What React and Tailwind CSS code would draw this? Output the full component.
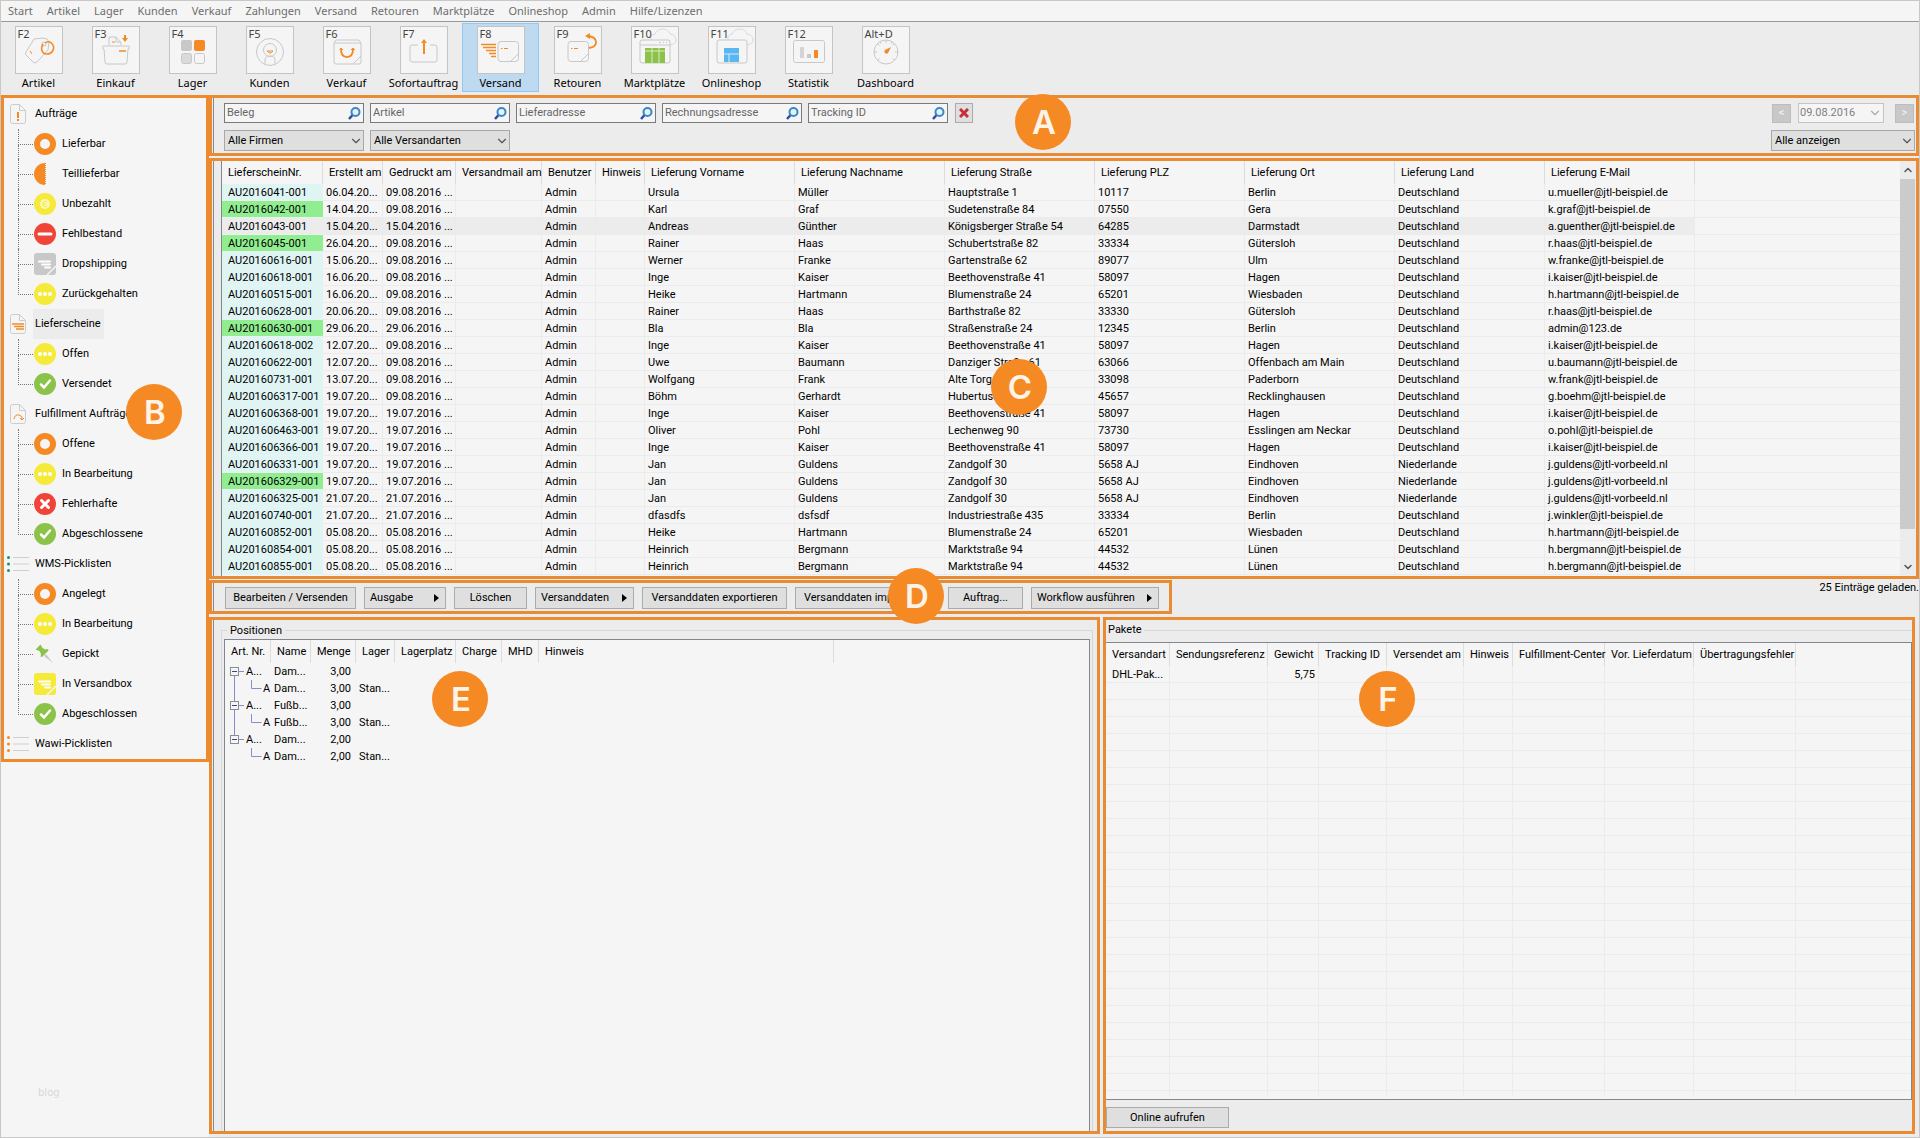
import React, { useState } from "react"
import clsx from "clsx"
import { ChevronDown, ChevronUp } from "lucide-react"

const menu = [
  "Start",
  "Artikel",
  "Lager",
  "Kunden",
  "Verkauf",
  "Zahlungen",
  "Versand",
  "Retouren",
  "Marktplätze",
  "Onlineshop",
  "Admin",
  "Hilfe/Lizenzen",
]

const toolIcons = {
  Artikel: (
    <>
      <path d="M19 13l9-1q5 0 6 4l-1 8-11 12q-2 2-4 0l-7-7q-1-2 0-3z" />
      <circle cx="29" cy="18" r="2" />
      <path
        d="M28 18c-3 5-1 10 4 10s8-5 6-9-6-4-8-2"
        stroke="#f28a26"
        strokeWidth="1.5"
      />
      <path d="M15 25l2 3" stroke="#f28a26" />
    </>
  ),
  Einkauf: (
    <>
      <path d="M17 19v-8h7l5 6v2M24 11v5h5" />
      <path d="M20 16h3" stroke="#f28a26" />
      <path d="M11 20h26v3h-1l-1 13q0 2-2 2H15q-2 0-2-2l-1-13h-1z" />
      <path d="M27 25h7" stroke="#f28a26" strokeWidth="1.5" />
      <path d="M33 9v4" stroke="#f28a26" strokeWidth="2" />
      <path d="M30 12h6l-3 4z" fill="#f28a26" stroke="none" />
    </>
  ),
  Lager: (
    <>
      <rect x="12" y="14" width="11" height="11" rx="2" fill="#c8c8c8" stroke="none" />
      <rect x="25" y="14" width="11" height="11" rx="2" fill="#f58a25" stroke="none" />
      <rect x="12.5" y="27.5" width="10" height="10" rx="2" fill="#dadada" />
      <rect x="25.5" y="27.5" width="10" height="10" rx="2" />
    </>
  ),
  Kunden: (
    <>
      <circle cx="24" cy="26" r="13.5" />
      <circle cx="24" cy="24" r="6.5" />
      <path d="M19 38v-4q0-4 5-4t5 4v4" />
      <path d="M21 25q3 4 6 0z" stroke="#f28a26" />
    </>
  ),
  Verkauf: (
    <>
      <path d="M11 17l2-3h23l2 3v19q0 2-2 2H13q-2 0-2-2zM11 17h27M30 38l8-8" />
      <path d="M18 23q0 8 6 8t6-8" stroke="#f28a26" strokeWidth="1.8" />
      <path d="M16.500 24l1.500-2 2 2M28 24l2-2 2 2" stroke="#f28a26" />
    </>
  ),
  Sofortauftrag: (
    <>
      <path d="M18 19h-6q-2 0-2 2v13q0 2 2 2h23q2 0 2-2V21q0-2-2-2h-5" />
      <path d="M24 28V15" stroke="#f28a26" strokeWidth="2" />
      <path d="M21 17l3-4 3 4z" fill="#f28a26" stroke="none" />
    </>
  ),
  Versand: (
    <>
      <path
        d="M4 18.500h15M6 21.500h13M9 24.500h10M12 27.500h7M14 30.500h5"
        stroke="#f28a26"
        strokeWidth="1.5"
      />
      <rect x="21" y="15.500" width="20.500" height="20" rx="3" />
      <path d="M34 35l7-7" />
      <path d="M24 22.500h1.500M27 22.500h4" stroke="#f28a26" />
    </>
  ),
  Retouren: (
    <>
      <rect x="14" y="15.500" width="20.500" height="20" rx="3" />
      <path d="M27 35l7-7" />
      <path d="M17 22.500h1.500M20 22.500h4" stroke="#f28a26" />
      <path d="M35 22q7-1 7-6t-8-6" stroke="#f28a26" strokeWidth="1.8" />
      <path d="M31 10l5-3v6z" fill="#f28a26" stroke="none" />
    </>
  ),
  Marktplätze: (
    <>
      <Cloud />
      <rect x="9" y="14" width="30" height="23" rx="2" fill="#f5f5f5" />
      <path d="M9 19h30M28 16.500h2M32 16.500h1M35 16.500h1" />
      <path d="M14 22h20v15H14z" fill="#8bc34a" stroke="none" />
      <path d="M14 25h20M21 22v15M28 22v15" stroke="#d9ecc0" />
    </>
  ),
  Onlineshop: (
    <>
      <Cloud />
      <rect x="9" y="14" width="30" height="23" rx="2" fill="#f5f5f5" />
      <path d="M16 22h15v14H16z" fill="#58b7f0" stroke="none" />
      <path d="M16 28h15M21 28v8" stroke="#d5ecfb" />
    </>
  ),
  Statistik: (
    <>
      <rect x="8.500" y="14.500" width="31" height="22" rx="2" />
      <path d="M17 21v11" strokeWidth="4" stroke="#d4d4d4" />
      <path d="M24 28v4" strokeWidth="4" />
      <path d="M31 24v8" stroke="#f58a25" strokeWidth="4" />
    </>
  ),
  Dashboard: (
    <>
      <circle cx="24" cy="26" r="12" />
      <path d="M24 14v3M12 26h3M33 26h3M15.500 17.500l2 2M32.500 17.500l-2 2M15.500 34.500l2-2M32.500 34.500l-2-2M18 15.600l1 2M30 15.600l-1 2" />
      <path d="M29 21l-3 6a2 2 0 1 1-3-3z" fill="#f28a26" stroke="none" />
    </>
  ),
}

const tools = [
  ["F2", "Artikel"],
  ["F3", "Einkauf"],
  ["F4", "Lager"],
  ["F5", "Kunden"],
  ["F6", "Verkauf"],
  ["F7", "Sofortauftrag"],
  ["F8", "Versand"],
  ["F9", "Retouren"],
  ["F10", "Marktplätze"],
  ["F11", "Onlineshop"],
  ["F12", "Statistik"],
  ["Alt+D", "Dashboard"],
]

const tree = [
  {
    label: "Aufträge",
    icon: "alert",
    items: [
      ["Lieferbar", "ring"],
      ["Teillieferbar", "half"],
      ["Unbezahlt", "euro"],
      ["Fehlbestand", "minus"],
      ["Dropshipping", "boxGray"],
      ["Zurückgehalten", "dots"],
    ],
  },
  {
    label: "Lieferscheine",
    icon: "delivery",
    items: [
      ["Offen", "dots"],
      ["Versendet", "check"],
    ],
  },
  {
    label: "Fulfillment Aufträge",
    icon: "fulfill",
    items: [
      ["Offene", "ring"],
      ["In Bearbeitung", "dots"],
      ["Fehlerhafte", "cross"],
      ["Abgeschlossene", "check"],
    ],
  },
  {
    label: "WMS-Picklisten",
    icon: "listGreen",
    items: [
      ["Angelegt", "ring"],
      ["In Bearbeitung", "dots"],
      ["Gepickt", "pin"],
      ["In Versandbox", "boxYellow"],
      ["Abgeschlossen", "check"],
    ],
  },
  { label: "Wawi-Picklisten", icon: "listOrange", items: [] },
]

const noteColumns = [
  ["LieferscheinNr.", "w-[101px]"],
  ["Erstellt am", "w-[60px]"],
  ["Gedruckt am", "w-[73px]"],
  ["Versandmail am", "w-[86px]"],
  ["Benutzer", "w-[54px]"],
  ["Hinweis", "w-[49px]"],
  ["Lieferung Vorname", "w-[150px]"],
  ["Lieferung Nachname", "w-[150px]"],
  ["Lieferung Straße", "w-[150px]"],
  ["Lieferung PLZ", "w-[150px]"],
  ["Lieferung Ort", "w-[150px]"],
  ["Lieferung Land", "w-[150px]"],
  ["Lieferung E-Mail", "w-[150px]"],
]

const DE = "Deutschland"
const NL = "Niederlande"

// number, created, printed, first name, last name, street, zip, city, country, mail
const notes = [
  ["AU2016041-001", "06.04.20...", "09.08.2016 ...", "Ursula", "Müller", "Hauptstraße 1", "10117", "Berlin", DE, "u.mueller@jtl-beispiel.de"],
  ["AU2016042-001", "14.04.20...", "09.08.2016 ...", "Karl", "Graf", "Sudetenstraße 84", "07550", "Gera", DE, "k.graf@jtl-beispiel.de"],
  ["AU2016043-001", "15.04.20...", "15.04.2016 ...", "Andreas", "Günther", "Königsberger Straße 54", "64285", "Darmstadt", DE, "a.guenther@jtl-beispiel.de"],
  ["AU2016045-001", "26.04.20...", "09.08.2016 ...", "Rainer", "Haas", "Schubertstraße 82", "33334", "Gütersloh", DE, "r.haas@jtl-beispiel.de"],
  ["AU20160616-001", "15.06.20...", "09.08.2016 ...", "Werner", "Franke", "Gartenstraße 62", "89077", "Ulm", DE, "w.franke@jtl-beispiel.de"],
  ["AU20160618-001", "16.06.20...", "09.08.2016 ...", "Inge", "Kaiser", "Beethovenstraße 41", "58097", "Hagen", DE, "i.kaiser@jtl-beispiel.de"],
  ["AU20160515-001", "16.06.20...", "09.08.2016 ...", "Heike", "Hartmann", "Blumenstraße 24", "65201", "Wiesbaden", DE, "h.hartmann@jtl-beispiel.de"],
  ["AU20160628-001", "20.06.20...", "09.08.2016 ...", "Rainer", "Haas", "Barthstraße 82", "33330", "Gütersloh", DE, "r.haas@jtl-beispiel.de"],
  ["AU20160630-001", "29.06.20...", "29.06.2016 ...", "Bla", "Bla", "Straßenstraße 24", "12345", "Berlin", DE, "admin@123.de"],
  ["AU20160618-002", "12.07.20...", "09.08.2016 ...", "Inge", "Kaiser", "Beethovenstraße 41", "58097", "Hagen", DE, "i.kaiser@jtl-beispiel.de"],
  ["AU20160622-001", "12.07.20...", "09.08.2016 ...", "Uwe", "Baumann", "Danziger Straße 61", "63066", "Offenbach am Main", DE, "u.baumann@jtl-beispiel.de"],
  ["AU20160731-001", "13.07.20...", "09.08.2016 ...", "Wolfgang", "Frank", "Alte Torgasse", "33098", "Paderborn", DE, "w.frank@jtl-beispiel.de"],
  ["AU201606317-001", "19.07.20...", "09.08.2016 ...", "Böhm", "Gerhardt", "Hubertusstraße", "45657", "Recklinghausen", DE, "g.boehm@jtl-beispiel.de"],
  ["AU201606368-001", "19.07.20...", "19.07.2016 ...", "Inge", "Kaiser", "Beethovenstraße 41", "58097", "Hagen", DE, "i.kaiser@jtl-beispiel.de"],
  ["AU201606463-001", "19.07.20...", "19.07.2016 ...", "Oliver", "Pohl", "Lechenweg 90", "73730", "Esslingen am Neckar", DE, "o.pohl@jtl-beispiel.de"],
  ["AU201606366-001", "19.07.20...", "19.07.2016 ...", "Inge", "Kaiser", "Beethovenstraße 41", "58097", "Hagen", DE, "i.kaiser@jtl-beispiel.de"],
  ["AU201606331-001", "19.07.20...", "19.07.2016 ...", "Jan", "Guldens", "Zandgolf 30", "5658 AJ", "Eindhoven", NL, "j.guldens@jtl-vorbeeld.nl"],
  ["AU201606329-001", "19.07.20...", "19.07.2016 ...", "Jan", "Guldens", "Zandgolf 30", "5658 AJ", "Eindhoven", NL, "j.guldens@jtl-vorbeeld.nl"],
  ["AU201606325-001", "21.07.20...", "21.07.2016 ...", "Jan", "Guldens", "Zandgolf 30", "5658 AJ", "Eindhoven", NL, "j.guldens@jtl-vorbeeld.nl"],
  ["AU20160740-001", "21.07.20...", "21.07.2016 ...", "dfasdfs", "dsfsdf", "Industriestraße 435", "33334", "Berlin", DE, "j.winkler@jtl-beispiel.de"],
  ["AU20160852-001", "05.08.20...", "05.08.2016 ...", "Heike", "Hartmann", "Blumenstraße 24", "65201", "Wiesbaden", DE, "h.hartmann@jtl-beispiel.de"],
  ["AU20160854-001", "05.08.20...", "05.08.2016 ...", "Heinrich", "Bergmann", "Marktstraße 94", "44532", "Lünen", DE, "h.bergmann@jtl-beispiel.de"],
  ["AU20160855-001", "05.08.20...", "05.08.2016 ...", "Heinrich", "Bergmann", "Marktstraße 94", "44532", "Lünen", DE, "h.bergmann@jtl-beispiel.de"],
]

const greenNotes = [
  "AU2016042-001",
  "AU2016045-001",
  "AU20160630-001",
  "AU201606329-001",
]

const actions = [
  ["Bearbeiten / Versenden", "w-[131px]", false],
  ["Ausgabe", "w-[82px]", true],
  ["Löschen", "w-[73px]", false],
  ["Versanddaten", "w-[99px]", true],
  ["Versanddaten exportieren", "w-[145px]", false],
  ["Versanddaten importieren", "w-[145px]", false],
  ["Auftrag...", "w-[75px]", false],
  ["Workflow ausführen", "w-[128px]", true],
]

const positionColumns = [
  ["Art. Nr.", "w-[46px]"],
  ["Name", "w-[40px]"],
  ["Menge", "w-[45px]"],
  ["Lager", "w-[39px]"],
  ["Lagerplatz", "w-[61px]"],
  ["Charge", "w-[46px]"],
  ["MHD", "w-[37px]"],
  ["Hinweis", "w-[295px]"],
]

const positions = [
  { name: "Dam...", amount: "3,00" },
  { name: "Dam...", amount: "3,00", child: true },
  { name: "Fußb...", amount: "3,00" },
  { name: "Fußb...", amount: "3,00", child: true },
  { name: "Dam...", amount: "2,00" },
  { name: "Dam...", amount: "2,00", child: true },
]

const packageColumns = [
  ["Versandart", "w-[64px]"],
  ["Sendungsreferenz", "w-[98px]"],
  ["Gewicht", "w-[51px]"],
  ["Tracking ID", "w-[68px]"],
  ["Versendet am", "w-[77px]"],
  ["Hinweis", "w-[49px]"],
  ["Fulfillment-Center", "w-[92px]"],
  ["Vor. Lieferdatum", "w-[89px]"],
  ["Übertragungsfehler", "w-[102px]"],
]

const emptyRows = Array.from({ length: 24 })

function Cloud() {
  return (
    <path
      d="M20 14q-1-5 4-6 2-5 8-5 5 0 7 5 6 1 6 6 0 4-6 5"
      stroke="#dadada"
    />
  )
}

function Badge({ letter, className }) {
  return (
    <span
      className={clsx(
        "absolute z-10 flex size-14 items-center justify-center rounded-full bg-[#f58a25] pl-[2px] font-['Inter',sans-serif] text-[33px] font-semibold text-[#fdf3e8]",
        className,
      )}
    >
      {letter}
    </span>
  )
}

function TreeIcon({ name }) {
  if (name === "pin") {
    return (
      <svg viewBox="0 0 22 22" className="size-[22px] shrink-0">
        <path d="M10 13l9 7-7-9z" fill="#c8c8c8" />
        <path d="M1.500 6.500l5-5 2 3.500 3 1.500 2.500-.5.500 1.500-6.500 6.500-1.500-.5.500-2.500-1.500-3z" fill="#8bc34a" />
      </svg>
    )
  }
  return (
    <svg viewBox="0 0 22 22" fill="none" className="size-[22px] shrink-0">
      {name === "ring" && (
        <circle cx="11" cy="11" r="8" stroke="#f58a25" strokeWidth="6" />
      )}
      {name === "half" && (
        <>
          <path d="M11 0a11 11 0 0 0 0 22z" fill="#f58a25" />
          <path d="M11.500 0v22" stroke="#f58a25" strokeDasharray="1 1" />
        </>
      )}
      {name === "euro" && (
        <>
          <circle cx="11" cy="11" r="11" fill="#f5e93a" />
          <circle cx="11" cy="11" r="5" fill="#fbf7b5" />
          <path d="M13 9q-4-2-4 2t4 2M8 11h4" stroke="#f5e93a" />
        </>
      )}
      {name === "minus" && (
        <>
          <circle cx="11" cy="11" r="11" fill="#f04438" />
          <path d="M5 11h12" stroke="#fff" strokeWidth="3" strokeLinecap="round" />
        </>
      )}
      {name === "cross" && (
        <>
          <circle cx="11" cy="11" r="11" fill="#f04438" />
          <path
            d="M7.500 7.500l7 7m0-7l-7 7"
            stroke="#fff"
            strokeWidth="3"
            strokeLinecap="round"
          />
        </>
      )}
      {name === "check" && (
        <>
          <circle cx="11" cy="11" r="11" fill="#8bc34a" />
          <path
            d="M7 11.500l3 3 6-7"
            stroke="#fff"
            strokeWidth="2.5"
            strokeLinecap="round"
          />
        </>
      )}
      {name === "dots" && (
        <>
          <circle cx="11" cy="11" r="11" fill="#f5e93a" />
          <g fill="#fff">
            <circle cx="6" cy="11" r="2" />
            <circle cx="11" cy="11" r="2" />
            <circle cx="16" cy="11" r="2" />
          </g>
        </>
      )}
      {(name === "boxGray" || name === "boxYellow") && (
        <>
          <rect
            width="22"
            height="22"
            rx="3"
            fill={name === "boxGray" ? "#c8c8c8" : "#f5e93a"}
          />
          <path
            d="M5 8.500h11M8 11.500h8M11 14.500h5"
            stroke="#fff"
            strokeWidth="2"
            strokeLinecap="round"
          />
          <path d="M13 22l9-9" stroke="#f5f5f5" strokeWidth="1.5" />
        </>
      )}
    </svg>
  )
}

function GroupIcon({ name }) {
  if (name === "listGreen" || name === "listOrange") {
    return (
      <svg viewBox="0 0 22 18" className="mr-1 ml-[3px] h-[18px] w-[22px] shrink-0">
        <path d="M6 2.500h16M6 9h16M6 15.500h16" stroke="#cfcfcf" />
        <g fill={name === "listGreen" ? "#148f77" : "#f28a26"}>
          <circle cx="1.500" cy="2.500" r="1.500" />
          <circle cx="1.500" cy="9" r="1.500" />
          <circle cx="1.500" cy="15.500" r="1.500" />
        </g>
      </svg>
    )
  }
  return (
    <svg
      viewBox="0 0 16 20"
      fill="none"
      className="mr-[7px] ml-[6px] h-5 w-4 shrink-0"
    >
      <path
        d="M2.500.5h7l6 6v11q0 2-2 2h-11q-2 0-2-2v-15q0-2 2-2zM9.500.5v6h6"
        stroke="#cccccc"
      />
      {name === "alert" && (
        <path d="M8 8v6M8 15v2" stroke="#f28a26" strokeWidth="2" />
      )}
      {name === "delivery" && (
        <path
          d="M2 10h12M4 12.500h10M6 15h8"
          stroke="#f28a26"
          strokeWidth="1.500"
        />
      )}
      {name === "fulfill" && (
        <path d="M4 15q1-5 5-4t3 4m-2-1l2 2 2-2" stroke="#f28a26" />
      )}
    </svg>
  )
}

function Sidebar() {
  return (
    <aside className="relative border-[3px] border-[#ee8a2c] pt-px">
      {tree.map((group) => (
        <div key={group.label}>
          <div className="flex h-[30px] items-center">
            <GroupIcon name={group.icon} />
            <span
              className={clsx(
                "flex h-[30px] items-center pr-[3px] pl-[2px]",
                group.label === "Lieferscheine" && "bg-[#ececec]",
              )}
            >
              {group.label}
            </span>
          </div>
          {group.items.map(([label, icon], i) => (
            <div key={label} className="flex h-[30px] items-center">
              <div className="mr-px ml-[14px] h-[30px] w-[15px]">
                <div className="h-4 border-b border-l border-dotted border-[#777]" />
                {i < group.items.length - 1 && (
                  <div className="h-[14px] border-l border-dotted border-[#777]" />
                )}
              </div>
              <TreeIcon name={icon} />
              <span className="pl-[6px]">{label}</span>
            </div>
          ))}
        </div>
      ))}
      <Badge letter="B" className="top-[286px] left-[122px]" />
    </aside>
  )
}

function SearchBox({ label }) {
  return (
    <div className="flex h-5 w-[140px] items-center border border-[#7a7a7a] bg-[#f5f5f5] px-[2px]">
      <input
        type="text"
        aria-label={label}
        placeholder={label}
        className="w-full min-w-0 outline-none placeholder:text-[#666]"
      />
      <svg viewBox="0 0 14 14" fill="none" className="size-[14px] shrink-0">
        <path d="M2 13l4-4.500" stroke="#2a4f9c" strokeWidth="2.500" />
        <circle cx="8.500" cy="6" r="4" fill="#e4f2fc" stroke="#3a86c8" strokeWidth="2" />
      </svg>
    </div>
  )
}

function Select({ label, className }) {
  return (
    <div className={clsx("relative", className)}>
      <select
        aria-label={label}
        className="h-[21px] w-full appearance-none border border-[#a8a8a8] bg-[#dfdfdf] pl-[3px]"
      >
        <option>{label}</option>
      </select>
      <ChevronDown
        size={14}
        strokeWidth={2}
        className="pointer-events-none absolute top-1 right-[1px] text-[#555]"
      />
    </div>
  )
}

function Filters() {
  return (
    <section className="relative border-[3px] border-[#e98b33] pl-px">
      <div className="flex justify-between border-l border-[#8a8a8a] pt-[5px] pr-px pb-[2px] pl-[10px]">
        <div>
          <div className="flex gap-[6px]">
            <SearchBox label="Beleg" />
            <SearchBox label="Artikel" />
            <SearchBox label="Lieferadresse" />
            <SearchBox label="Rechnungsadresse" />
            <SearchBox label="Tracking ID" />
            <button
              aria-label="Filter löschen"
              className="ml-px flex h-5 w-[18px] items-center justify-center border border-[#ababab] bg-[#dfdfdf]"
            >
              <svg viewBox="0 0 10 10" className="size-[10px]">
                <path d="M1 1l8 8M9 1L1 9" stroke="#c62f35" strokeWidth="3" />
              </svg>
            </button>
          </div>
          <div className="mt-[7px] flex gap-[6px]">
            <Select label="Alle Firmen" className="w-[140px]" />
            <Select label="Alle Versandarten" className="w-[140px]" />
          </div>
        </div>
        <div className="w-[144px]">
          <div className="flex h-5 items-center px-px">
            <button
              disabled
              className="h-[19px] w-[19px] border border-[#bdbdbd] bg-[#c8c8c8] text-[#f5f5f5]"
            >
              &lt;
            </button>
            <div className="mr-auto ml-[7px] flex h-5 w-[86px] items-center border border-[#c4c4c4] bg-[#f5f5f5] px-px">
              <input
                type="text"
                aria-label="Datum"
                disabled
                defaultValue="09.08.2016"
                className="w-full min-w-0 text-[#808080]"
              />
              <ChevronDown size={14} className="shrink-0 text-[#aaa]" />
            </div>
            <button
              disabled
              className="h-[19px] w-[19px] border border-[#bdbdbd] bg-[#c8c8c8] text-[#f5f5f5]"
            >
              &gt;
            </button>
          </div>
          <Select label="Alle anzeigen" className="mt-[7px]" />
        </div>
      </div>
      <Badge letter="A" className="-top-1 left-[803px]" />
    </section>
  )
}

function DeliveryNotes() {
  const [selected, setSelected] = useState("AU2016043-001")

  return (
    <section className="relative mt-[2px] border-[3px] border-[#e98b33] pl-px">
      <div className="flex border-l border-[#8a8a8a] pl-[7px]">
        <div className="min-w-0 flex-1 overflow-hidden border-l border-[#82878f] bg-[#f5f5f5] pb-px">
          <table className="w-full table-fixed border-separate border-spacing-0">
            <thead>
              <tr className="h-[23px]">
                {noteColumns.map(([label, width]) => (
                  <th
                    key={label}
                    className={clsx(
                      width,
                      "border-r border-[#dcdcdc] p-0 pl-[6px] text-left font-normal whitespace-nowrap",
                    )}
                  >
                    {label}
                  </th>
                ))}
                <th />
              </tr>
            </thead>
            <tbody>
              {notes.map(([id, created, printed, ...address]) => {
                const cells = [created, printed, "", "Admin", "", ...address]

                return (
                  <tr
                    key={id}
                    onClick={() => setSelected(id)}
                    className="h-[17px] leading-[15px]"
                  >
                    <td
                      className={clsx(
                        "border-b border-[#ebf3f2] p-0 pt-px pl-[6px] whitespace-nowrap",
                        greenNotes.includes(id)
                          ? "bg-[#90ee90]"
                          : id === selected
                            ? "bg-[#ececec]"
                            : "bg-[#dff5f4]",
                      )}
                    >
                      {id}
                    </td>
                    {cells.map((cell, i) => (
                      <td
                        key={i}
                        className={clsx(
                          "border-r border-b border-[#ebebeb] p-0 pt-px pl-[3px] whitespace-nowrap",
                          id === selected && "bg-[#ececec]",
                        )}
                      >
                        {cell}
                      </td>
                    ))}
                    <td className="border-b border-[#ebebeb] p-0" />
                  </tr>
                )
              })}
            </tbody>
          </table>
        </div>
        <div className="mr-px flex w-[15px] flex-col items-center bg-[#ececec]">
          <ChevronUp size={12} strokeWidth={3} className="my-[3px] text-[#555]" />
          <div className="h-[350px] w-full bg-[#cbcbcb]" />
          <ChevronDown
            size={12}
            strokeWidth={3}
            className="mt-auto mb-[3px] text-[#555]"
          />
        </div>
      </div>
      <Badge letter="C" className="top-[198px] left-[779px]" />
    </section>
  )
}

function Actions() {
  return (
    <div className="mt-px flex items-start justify-between">
      <section className="relative border-[3px] border-[#e98b33] pl-px">
        <div className="flex gap-2 border-l border-[#8a8a8a] pt-1 pr-[10px] pb-[2px] pl-[11px]">
          {actions.map(([label, width, hasMenu]) => (
            <button
              key={label}
              className={clsx(
                width,
                "flex h-[22px] items-center border border-[#ababab] bg-[#dfdfdf] whitespace-nowrap",
                hasMenu ? "justify-between px-[5px]" : "justify-center",
              )}
            >
              {label}
              {hasMenu && (
                <span className="mr-px h-0 w-0 border-y-4 border-l-[5px] border-y-transparent border-l-black" />
              )}
            </button>
          ))}
        </div>
        <Badge letter="D" className="-top-[15px] left-[676px]" />
      </section>
      <span className="leading-[15px]">25 Einträge geladen.</span>
    </div>
  )
}

function Positions() {
  return (
    <section className="relative flex w-[891px] border-[3px] border-[#e98b33] pl-px">
      <div className="flex flex-1 border-l border-[#8a8a8a] pt-[2px] pr-1 pl-[7px]">
        <fieldset className="flex min-w-0 flex-1 flex-col border border-b-0 border-[#d8d8d8] pr-[2px] pl-[2px]">
          <legend className="ml-[3px] px-[3px] leading-[17px]">Positionen</legend>
          <div className="flex-1 border border-b-0 border-[#82878f] bg-[#f5f5f5]">
            <table className="table-fixed border-separate border-spacing-0">
              <thead>
                <tr className="h-[23px]">
                  {positionColumns.map(([label, width]) => (
                    <th
                      key={label}
                      className={clsx(
                        width,
                        "border-r border-[#dcdcdc] p-0 pl-[6px] text-left font-normal whitespace-nowrap",
                      )}
                    >
                      {label}
                    </th>
                  ))}
                </tr>
              </thead>
              <tbody>
                {positions.map((row, i) => (
                  <tr key={i} className="h-[17px]">
                    <td className="p-0">
                      <div className="flex h-[17px] items-center">
                        <svg
                          viewBox="0 0 38 17"
                          fill="none"
                          stroke="#8a8ad0"
                          className={clsx(
                            "h-[17px] shrink-0",
                            row.child ? "w-[38px]" : "w-[21px]",
                          )}
                          preserveAspectRatio="xMinYMin slice"
                        >
                          {row.child ? (
                            <path d="M26.500 0v8.500h10" />
                          ) : (
                            <>
                              <rect x="5.500" y="4.500" width="8" height="8" stroke="#8c8c8c" />
                              <path d="M7 8.500h5" stroke="#334a9c" />
                              <path d="M14 8.500h5" />
                              {i < 4 && <path d="M9.500 13v4" />}
                              {i > 0 && <path d="M9.500 0v4" />}
                            </>
                          )}
                          {row.child && i < 5 && <path d="M9.500 0v17" />}
                        </svg>
                        {row.child ? "A" : "A..."}
                      </div>
                    </td>
                    <td className="p-0 pl-[3px] whitespace-nowrap">{row.name}</td>
                    <td className="p-0 pr-[5px] text-right">{row.amount}</td>
                    <td className="p-0 pl-[3px] whitespace-nowrap">
                      {row.child && "Stan..."}
                    </td>
                  </tr>
                ))}
              </tbody>
            </table>
          </div>
        </fieldset>
      </div>
      <Badge letter="E" className="top-[51px] left-[220px]" />
    </section>
  )
}

function Packages() {
  return (
    <section className="relative flex flex-1 flex-col border-[3px] border-[#e98b33]">
      <fieldset className="flex min-w-0 flex-1 flex-col border-t border-[#d8d8d8] pt-[2px] pb-[3px]">
        <legend className="px-[2px] leading-[20px]">Pakete</legend>
        <div className="flex-1 border border-l-0 border-[#82878f] bg-[#f5f5f5]">
          <table className="w-full table-fixed border-separate border-spacing-0">
            <thead>
              <tr className="h-[23px]">
                {packageColumns.map(([label, width]) => (
                  <th
                    key={label}
                    className={clsx(
                      width,
                      "border-r border-[#dcdcdc] p-0 pl-[6px] text-left font-normal whitespace-nowrap",
                    )}
                  >
                    {label}
                  </th>
                ))}
                <th />
              </tr>
            </thead>
            <tbody>
              <tr className="h-[17px] leading-[15px]">
                {packageColumns.map(([label], i) => (
                  <td
                    key={label}
                    className={clsx(
                      "border-r border-b border-[#ebebeb] p-0 pt-px whitespace-nowrap",
                      i === 2 ? "pr-[3px] text-right" : "pl-[6px]",
                    )}
                  >
                    {i === 0 && "DHL-Pak..."}
                    {i === 2 && "5,75"}
                  </td>
                ))}
                <td className="border-b border-[#ebebeb] p-0" />
              </tr>
              {emptyRows.map((_, row) => (
                <tr key={row} className="h-[17px]">
                  {packageColumns.map(([label]) => (
                    <td
                      key={label}
                      className="border-r border-b border-[#ebebeb] p-0"
                    />
                  ))}
                  <td className="border-b border-[#ebebeb] p-0" />
                </tr>
              ))}
              <tr className="h-[6px]">
                {packageColumns.map(([label]) => (
                  <td key={label} className="border-r border-[#ebebeb] p-0" />
                ))}
                <td className="p-0" />
              </tr>
            </tbody>
          </table>
        </div>
        <button className="mt-[7px] h-[21px] w-[123px] border border-[#ababab] bg-[#dfdfdf]">
          Online aufrufen
        </button>
      </fieldset>
      <Badge letter="F" className="top-[51px] left-[253px]" />
    </section>
  )
}

function App() {
  const [tool, setTool] = useState("Versand")

  return (
    <div className="flex min-h-screen flex-col border border-[#c8c8c8] bg-[#ececec] font-['Roboto','Liberation_Sans',sans-serif] text-[11px] leading-[14px] text-black">
      <nav className="flex h-[21px] items-center gap-[14px] border-b border-[#999] bg-[#f5f5f5] pl-[7px] font-['Noto_Sans',sans-serif] text-[#6d6d6d]">
        {menu.map((item) => (
          <button key={item}>{item}</button>
        ))}
      </nav>
      <header className="-ml-px flex h-[73px] items-start pt-px font-['Noto_Sans',sans-serif]">
        {tools.map(([shortcut, label]) => (
          <button
            key={label}
            onClick={() => setTool(label)}
            className={clsx(
              "flex h-[69px] w-[77px] flex-col items-center border pt-[2px] whitespace-nowrap",
              tool === label
                ? "border-[#90c8f0] bg-[#bddaf0]"
                : "border-transparent",
            )}
          >
            <span className="relative size-12 shrink-0 border border-[#c4c4c4] bg-[#f5f5f5]">
              <svg
                viewBox="1 1 46 46"
                fill="none"
                stroke="#c8c8c8"
                className="size-full"
              >
                {toolIcons[label]}
              </svg>
              <span className="absolute top-0 left-[2px] text-[#444]">
                {shortcut}
              </span>
            </span>
            <span className="mt-[2px]">{label}</span>
          </button>
        ))}
      </header>
      <div className="flex flex-1">
        <div className="flex w-[208px] shrink-0 flex-col bg-[#f5f5f5]">
          <Sidebar />
          <span className="mt-auto mb-[37px] ml-[37px] font-['DejaVu_Sans',sans-serif] text-[10px] text-[#d8d8d8]">
            blog
          </span>
        </div>
        <main className="flex min-w-0 flex-1 flex-col pb-[3px]">
          <Filters />
          <DeliveryNotes />
          <Actions />
          <div className="mt-[3px] flex flex-1 gap-[3px] pr-1">
            <Positions />
            <Packages />
          </div>
        </main>
      </div>
    </div>
  )
}

export default App
